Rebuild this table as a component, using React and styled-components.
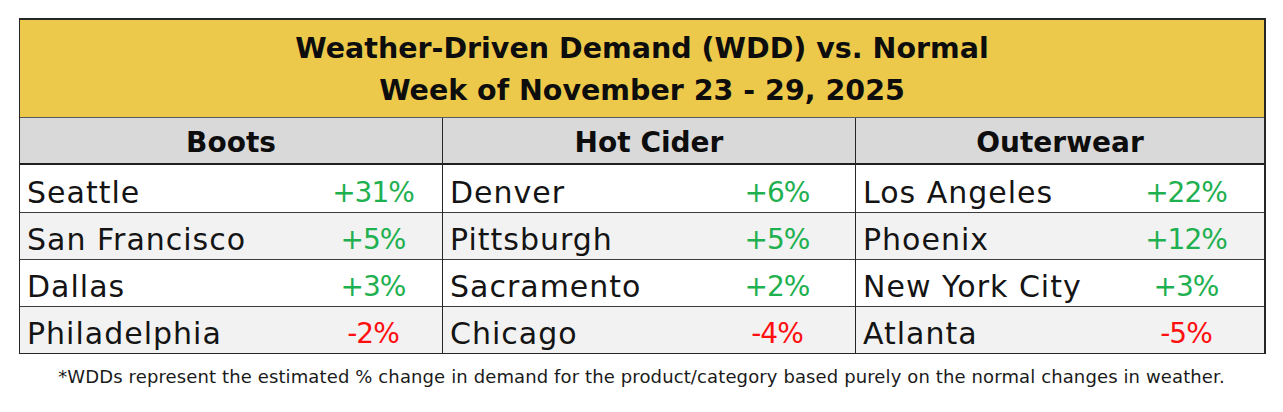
import React from 'react';
import styled, { createGlobalStyle } from 'styled-components';

const GlobalStyle = createGlobalStyle`
  body {
    margin: 0;
    background: #ffffff;
    font-family: "DejaVu Sans", "Liberation Sans", sans-serif;
    color: #111111;
  }
`;

const Page = styled.div`
  display: flex;
  flex-direction: column;
  align-items: flex-start;
  padding: 18px 0 0 19px;
  width: 1283px;
  box-sizing: border-box;
`;

const Table = styled.div`
  display: flex;
  flex-direction: column;
  width: 1247px;
  box-sizing: border-box;
  border: 1px solid #262626;
  border-top-width: 2px;
  border-right-width: 2px;
`;

const Title = styled.div`
  display: flex;
  flex-direction: column;
  align-items: center;
  justify-content: center;
  height: 98px;
  padding-top: 3px;
  box-sizing: border-box;
  background: #ecc84b;
  border-bottom: 1px solid #5a5a5a;
  font-weight: bold;
  font-size: 28.5px;
  line-height: 42px;
  color: #0d0d0d;
`;

const Columns = styled.div`
  display: grid;
  grid-template-columns: 422px 413px 409px;
`;

const Column = styled.div`
  display: flex;
  flex-direction: column;
  border-left: ${({ first }) => (first ? 'none' : '1px solid #262626')};
`;

const Header = styled.div`
  display: flex;
  align-items: center;
  justify-content: center;
  height: 47px;
  padding-top: 4px;
  box-sizing: border-box;
  background: #d9d9d9;
  border-bottom: 2px solid #1f1f1f;
  font-weight: bold;
  font-size: 28px;
  color: #0d0d0d;
`;

const Row = styled.div`
  display: flex;
  align-items: center;
  height: 47px;
  padding-top: 6px;
  box-sizing: border-box;
  background: ${({ shaded }) => (shaded ? '#f2f2f2' : '#ffffff')};
  border-top: ${({ first }) => (first ? '1px solid transparent' : '1px solid #3c3c3c')};
`;

const City = styled.span`
  flex: 1;
  padding-left: 7px;
  font-size: 30px;
  letter-spacing: 1px;
  color: #141414;
  white-space: nowrap;
`;

const Value = styled.span`
  width: 120px;
  margin-right: ${({ offset }) => offset}px;
  text-align: center;
  font-size: 28px;
  letter-spacing: -1px;
  color: ${({ negative }) => (negative ? '#ff1010' : '#1fb050')};
`;

const Note = styled.div`
  align-self: center;
  margin-top: 12px;
  margin-left: -19px;
  font-size: 18px;
  letter-spacing: 0.12px;
  color: #1a1a1a;
`;

const columns = [
  {
    name: 'Boots',
    offset: 9,
    rows: [
      ['Seattle', '+31%'],
      ['San Francisco', '+5%'],
      ['Dallas', '+3%'],
      ['Philadelphia', '-2%'],
    ],
  },
  {
    name: 'Hot Cider',
    offset: 18,
    rows: [
      ['Denver', '+6%'],
      ['Pittsburgh', '+5%'],
      ['Sacramento', '+2%'],
      ['Chicago', '-4%'],
    ],
  },
  {
    name: 'Outerwear',
    offset: 18,
    rows: [
      ['Los Angeles', '+22%'],
      ['Phoenix', '+12%'],
      ['New York City', '+3%'],
      ['Atlanta', '-5%'],
    ],
  },
];

const App = () => (
  <>
    <GlobalStyle />
    <Page>
      <Table>
        <Title>
          <span>Weather-Driven Demand (WDD) vs. Normal</span>
          <span>Week of November 23 - 29, 2025</span>
        </Title>
        <Columns>
          {columns.map((col, i) => (
            <Column key={col.name} first={i == 0}>
              <Header>{col.name}</Header>
              {col.rows.map(([city, value], j) => (
                <Row key={city} first={j == 0} shaded={j % 2 == 1}>
                  <City>{city}</City>
                  <Value offset={col.offset} negative={value.startsWith('-')}>
                    {value}
                  </Value>
                </Row>
              ))}
            </Column>
          ))}
        </Columns>
      </Table>
      <Note>
        *WDDs represent the estimated % change in demand for the product/category based purely on the normal changes in weather.
      </Note>
    </Page>
  </>
);

export default App;
